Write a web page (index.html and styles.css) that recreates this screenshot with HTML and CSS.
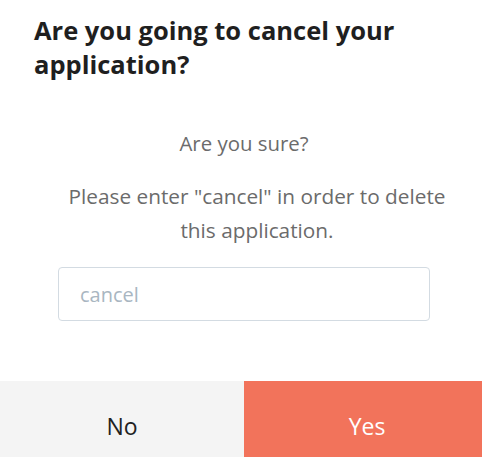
FILE: index.html
```html
<!DOCTYPE html>
<html lang="en">
<head>
  <meta charset="UTF-8">
  <title>Cancel application</title>
  <meta name="viewport" content="width=device-width, initial-scale=1">
  <link rel="stylesheet" href="styles.css">
</head>
<body>

<div class="modal">
  <h2 class="modal-title">Are you going to cancel your application?</h2>

  <div class="modal-body">
    <p class="sure">Are you sure?</p>
    <p class="hint">Please enter "cancel" in order to delete this application.</p>
    <input type="text" class="confirm-input" placeholder="cancel">
  </div>

  <div class="modal-actions">
    <button type="button" class="btn btn-no">No</button>
    <button type="button" class="btn btn-yes">Yes</button>
  </div>
</div>

</body>
</html>
```

FILE: styles.css
```css
* {
  box-sizing: border-box;
}
body {
  margin: 0;
  font-family: 'Open Sans', 'Liberation Sans', sans-serif;
  background: #fff;
}
.modal {
  width: 482px;
  height: 457px;
  display: flex;
  flex-direction: column;
}
.modal-title {
  margin: 0;
  padding: 13px 34px 0;
  font-size: 25.5px;
  line-height: 34px;
  font-weight: 700;
  color: #1f1f1f;
}
.modal-body {
  flex: 1;
  display: flex;
  flex-direction: column;
  align-items: center;
  padding-top: 45px;
  text-align: center;
  color: #6b6b6b;
  font-size: 20.4px;
}
.sure {
  margin: 0 0 0 6px;
  line-height: 34px;
}
.hint {
  margin: 19px 0 0 32px;
  width: 402px;
  font-size: 20.8px;
  line-height: 34px;
}
.confirm-input {
  margin-top: 20px;
  margin-left: 6px;
  width: 372px;
  height: 54px;
  padding: 0 21px;
  border: 1px solid #d3dbe2;
  border-radius: 4px;
  font-family: inherit;
  font-size: 20px;
  color: #333;
}
.confirm-input::placeholder {
  color: #a9b6c1;
}
.modal-actions {
  display: flex;
  height: 76px;
}
.btn {
  border: none;
  padding-top: 14px;
  font-family: inherit;
  font-size: 23px;
  cursor: pointer;
}
.btn-no {
  width: 244px;
  background-color: #f4f4f4;
  color: #222;
}
.btn-yes {
  flex: 1;
  padding-left: 14px;
  background-color: #f2735b;
  color: #fff;
}
```
